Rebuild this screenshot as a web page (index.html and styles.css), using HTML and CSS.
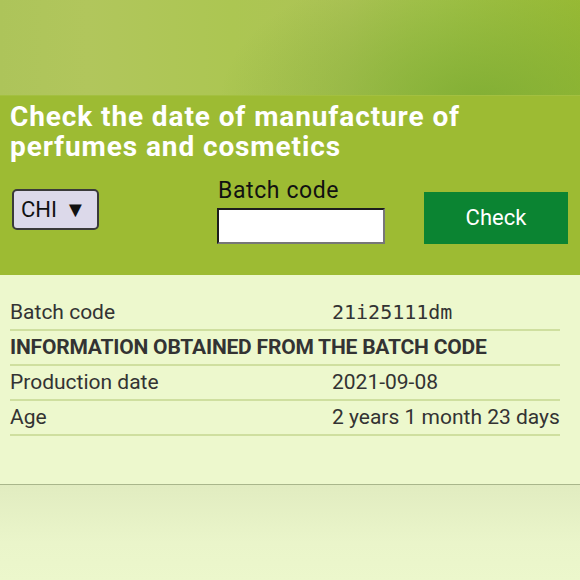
FILE: index.html
```html
<!DOCTYPE html>
<html>
<head>
<meta charset="utf-8">
<link rel="stylesheet" href="styles.css">
</head>
<body>
<div class="banner"></div>
<header class="head">
  <h1 class="title">Check the date of manufacture of perfumes and cosmetics</h1>
  <div class="controls">
    <div class="select">CHI <span class="arrow">▼</span></div>
    <div class="field">
      <label class="label">Batch code</label>
      <div class="input"></div>
    </div>
    <div class="btn">Check</div>
  </div>
</header>
<main class="content">
  <div class="info">
    <div class="row"><span class="k">Batch code</span><span class="v mono">21i25111dm</span></div>
    <div class="row"><span class="k bold">INFORMATION OBTAINED FROM THE BATCH CODE</span></div>
    <div class="row"><span class="k">Production date</span><span class="v">2021-09-08</span></div>
    <div class="row"><span class="k">Age</span><span class="v">2 years 1 month 23 days</span></div>
  </div>
</main>
<div class="footer"></div>
</body>
</html>
```
FILE: styles.css
```css
html, body { margin: 0; padding: 0; }
body {
  width: 580px;
  height: 580px;
  overflow: hidden;
  font-family: Roboto, "Liberation Sans", sans-serif;
  background: #ebf6cb;
}
.banner {
  height: 95px;
  background:
    radial-gradient(ellipse 260px 140px at 480px 100px, rgba(125,172,50,0.85), rgba(125,172,50,0) 100%),
    linear-gradient(90deg, #adc45a 0%, #b1c65c 15%, #acc652 40%, #adc356 60%, #a6c44c 75%, #9cbc35 100%);
}
.head {
  background: #9dbb33;
  height: 180px;
  box-sizing: border-box;
  padding: 6px 10px 0 10px;
  border-top: 1px solid #a3c040;
}
.title {
  margin: 0;
  color: #fff;
  font-size: 28px;
  letter-spacing: 0.9px;
  font-weight: 700;
  line-height: 30px;
}
.controls {
  display: flex;
  align-items: flex-start;
  margin-top: 16px;
}
.select {
  margin-top: 11px;
  margin-left: 2px;
  width: 87px;
  height: 41px;
  box-sizing: border-box;
  border: 2px solid #3a3a3a;
  border-radius: 5px;
  background: #dcd9ea;
  font-size: 22px;
  line-height: 37px;
  padding-left: 7px;
  color: #111;
  white-space: nowrap;
}
.arrow { font-size: 22px; margin-left: 2px; }
.field {
  margin-left: 118px;
  display: flex;
  flex-direction: column;
}
.label {
  font-size: 23px;
  letter-spacing: 0.6px;
  line-height: 26px;
  color: #111;
  margin-left: 1px;
}
.input {
  margin-top: 4px;
  width: 168px;
  height: 36px;
  box-sizing: border-box;
  background: #fff;
  border: 2px solid;
  border-color: #1d1d1d #777 #777 #1d1d1d;
}
.btn {
  margin-left: 39px;
  margin-top: 14px;
  width: 144px;
  height: 52px;
  background: #0b8432;
  color: #fff;
  font-size: 22px;
  line-height: 52px;
  text-align: center;
}
.content {
  height: 209px;
  box-sizing: border-box;
  padding: 21px 20px 0 10px;
  background: #edf8cd;
}
.info {
  width: 550px;
  font-size: 21px;
  color: #333;
}
.row {
  display: flex;
  align-items: center;
  height: 31px;
  padding-bottom: 2px;
  border-bottom: 2px solid #cfdf9f;
}
.k { width: 322px; flex: none; }
.k.bold { font-weight: 700; width: auto; letter-spacing: -0.2px; }
.mono { font-family: "DejaVu Sans Mono", monospace; font-size: 20px; }
.footer {
  height: 96px;
  border-top: 1px solid #a9b68b;
  background: linear-gradient(180deg, #e1ecc0 0%, #eaf5ca 60%, #ecf7cc 100%);
}
```
